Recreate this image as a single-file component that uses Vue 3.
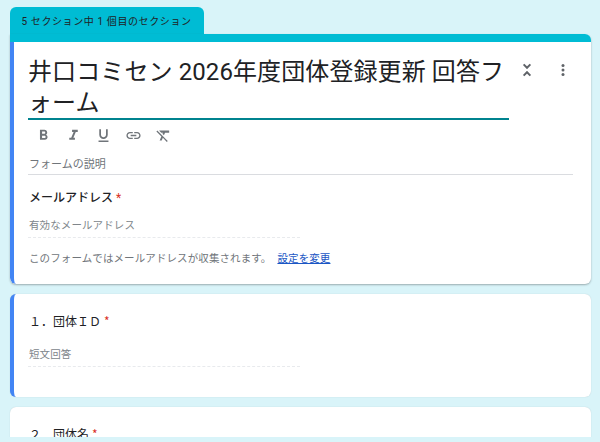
<script setup>
const tools = ['b', 'i', 'u', 'link', 'clear']
</script>

<template>
  <div class="viewport">
    <div class="page">
      <div class="tab">5 セクション中 1 個目のセクション</div>
      <section class="card head-card">
        <div class="band"></div>
        <div class="head-body">
          <div class="title-row">
            <div class="title-wrap">
              <h1 class="title">井口コミセン 2026年度団体登録更新 回答フォーム</h1>
            </div>
            <div class="actions">
              <svg class="act" viewBox="0 0 24 24" width="18" height="18" fill="none" stroke="#5f6368" stroke-width="2.6">
                <path d="M7.500 4.500 12 9l4.500-4.500M7.500 19.500 12 15l4.500 4.500" />
              </svg>
              <svg class="act" viewBox="0 0 24 24" width="18" height="18" fill="#5f6368">
                <circle cx="12" cy="6" r="2" /><circle cx="12" cy="12" r="2" /><circle cx="12" cy="18" r="2" />
              </svg>
            </div>
          </div>
          <div class="toolbar">
            <svg v-for="t in tools" :key="t" viewBox="0 0 24 24" fill="#70757a">
              <path v-if="t === 'b'" d="M15.600 10.790c.970-.670 1.650-1.770 1.650-2.790 0-2.260-1.750-4-4-4H7v14h7.040c2.090 0 3.710-1.700 3.710-3.790 0-1.520-.860-2.820-2.150-3.420zM10 6.500h3c.830 0 1.500.670 1.500 1.500s-.670 1.500-1.500 1.500h-3v-3zm3.500 9H10v-3h3.500c.830 0 1.500.670 1.500 1.500s-.670 1.500-1.500 1.500z" />
              <path v-else-if="t === 'i'" d="M10 4v3h2.210l-3.420 8H6v3h8v-3h-2.210l3.420-8H18V4z" />
              <path v-else-if="t === 'u'" d="M12 17c3.310 0 6-2.690 6-6V3h-2.500v8c0 1.930-1.570 3.500-3.500 3.500S8.500 12.930 8.500 11V3H6v8c0 3.310 2.690 6 6 6zm-7 2v2h14v-2H5z" />
              <path v-else-if="t === 'link'" d="M3.900 12c0-1.710 1.390-3.100 3.100-3.100h4V7H7c-2.760 0-5 2.240-5 5s2.240 5 5 5h4v-1.900H7c-1.710 0-3.100-1.390-3.100-3.100zM8 13h8v-2H8v2zm9-6h-4v1.900h4c1.710 0 3.100 1.390 3.100 3.100s-1.390 3.100-3.100 3.100h-4V17h4c2.760 0 5-2.240 5-5s-2.240-5-5-5z" />
              <path v-else d="M3.270 5 2 6.270l6.970 6.970L6.500 19h3l1.570-3.660L16.730 21 18 19.730 3.550 5.270 3.270 5zM6 5v.180L8.820 8h2.400l-.720 1.680 2.100 2.100L14.210 8H20V5H6z" />
            </svg>
          </div>
          <div class="desc">フォームの説明</div>
          <div class="q-label strong">メールアドレス<span class="req">*</span></div>
          <div class="input">有効なメールアドレス</div>
          <p class="note">このフォームではメールアドレスが収集されます。<a class="link">設定を変更</a></p>
        </div>
      </section>

      <section class="card q-card active">
        <div class="q-label mono">１．団体ＩＤ<span class="req">*</span></div>
        <div class="input short">短文回答</div>
      </section>

      <section class="card q-card">
        <div class="q-label mono">２．団体名<span class="req">*</span></div>
      </section>
    </div>
  </div>
</template>

<style>
html, body { margin: 0; background: #d9f4f9; }
</style>

<style scoped>
.viewport {
  height: 437px;
  overflow: hidden;
  font-family: Roboto, "Noto Sans CJK JP", sans-serif;
  color: #202124;
}
.page {
  padding: 7px 9px 0 10px;
}
.tab {
  width: 194px;
  height: 27px;
  box-sizing: border-box;
  padding: 7.500px 0 0 11.500px;
  background: #00bcd4;
  border-radius: 6px 6px 0 0;
  font-size: 10px;
  line-height: 14px;
  letter-spacing: 0.6px;
  color: #202124;
  white-space: nowrap;
}
.card {
  background: #fff;
  border-radius: 6px;
  box-sizing: border-box;
}
.head-card {
  border-top-left-radius: 0;
  overflow: hidden;
  height: 250px;
  box-shadow: 0 1px 2px rgba(60, 64, 67, 0.4);
  margin-bottom: 10px;
  position: relative;
}
.band {
  height: 8px;
  background: #00bcd4;
}
.head-body {
  border-left: 4px solid #4285f4;
  height: 242px;
  padding: 0 18px 0 14px;
  border-radius: 0 0 0 6px;
}
.title-row {
  display: flex;
  align-items: flex-start;
}
.title-wrap {
  flex: none;
  width: 481px;
  height: 78px;
  box-sizing: border-box;
  padding-top: 15px;
  border-bottom: 2px solid #00838f;
}
.title {
  margin: 0;
  font-size: 24px;
  font-weight: 400;
  line-height: 31px;
  letter-spacing: 0.1px;
}
.actions {
  display: flex;
  gap: 18px;
  padding: 19px 0 0 9px;
}
.toolbar {
  display: flex;
  gap: 13px;
  padding: 6.500px 0 0 7px;
  height: 24px;
  box-sizing: border-box;
}
.toolbar svg { width: 17px; height: 17px; flex: none; }
.desc {
  margin-top: 13px;
  font-size: 11px;
  line-height: 15px;
  color: #70757a;
  height: 17px;
  padding-left: 1px;
  border-bottom: 1px solid #dadce0;
}
.q-label {
  font-size: 12px;
  line-height: 18px;
}
.strong {
  margin-top: 14px;
  font-weight: 500;
  padding-left: 1px;
}
.req {
  color: #d93025;
  font-weight: 400;
  margin-left: 3px;
}
.input {
  margin-top: 11px;
  width: 272px;
  height: 20px;
  box-sizing: border-box;
  font-size: 10.500px;
  letter-spacing: 0.1px;
  line-height: 15px;
  color: #80868b;
  padding-left: 1px;
  border-bottom: 1px dashed #e8eaed;
}
.note {
  margin: 13px 0 0;
  font-size: 10.500px;
  letter-spacing: 0.1px;
  line-height: 15px;
  color: #70757a;
  padding-left: 1px;
}
.link {
  color: #1a56c4;
  text-decoration: underline;
  margin-left: 6px;
}
.q-card {
  height: 103px;
  padding: 18px 18px 0 18px;
  margin-bottom: 10px;
  box-shadow: 0 0 1px rgba(60, 64, 67, 0.25);
}
.q-card.active {
  border-left: 4px solid #4285f4;
  padding-left: 14px;
}
.mono {
  font-family: "Noto Sans CJK JP", sans-serif;
  padding-left: 1px;
}
.short {
  margin-top: 17px;
}
</style>
